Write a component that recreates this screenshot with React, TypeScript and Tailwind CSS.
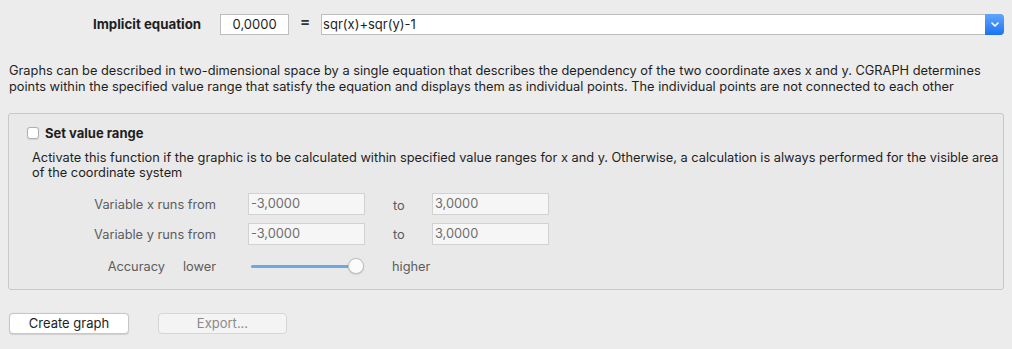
import React from "react";

function Field({ value, className = "" }: { value: string; className?: string }) {
  return (
    <div
      className={`h-[22px] w-[117px] border border-[#d2d2d2] bg-[#f6f6f6] pl-[2px] text-[12.8px] leading-[20px] text-[#6e6e6e] ${className}`}
    >
      {value}
    </div>
  );
}

export default function App() {
  return (
    <div
      className="h-[349px] w-[1012px] overflow-hidden bg-[#ececec] text-[#222] antialiased"
      style={{ fontFamily: "Inter, 'Noto Sans', sans-serif" }}
    >
      {/* Top row */}
      <div className="flex items-center pt-[14px]">
        <div className="ml-[93px] text-[13.3px] font-bold text-[#1e1e1e]">Implicit equation</div>
        <div className="ml-[19px] flex h-[21px] w-[69px] items-center justify-center border border-[#bdbdbd] bg-white text-[13px] text-[#1e1e1e]">
          0,0000
        </div>
        <div className="ml-[11px] w-[9px] -translate-y-[3px] text-[15px] font-bold leading-none text-[#333]">=</div>
        <div className="ml-[12px] flex h-[21px] w-[683px] items-stretch rounded-r-[4px] border-y border-l border-[#bdbdbd] bg-white">
          <div className="flex-1 pl-[1px] text-[13px] leading-[19px] text-[#1e1e1e]">sqr(x)+sqr(y)-1</div>
          <div className="-my-px flex w-[19px] items-center justify-center rounded-r-[4px] bg-gradient-to-b from-[#5fa5fa] to-[#1672f3]">
            <svg width="8" height="5" viewBox="0 0 8 5">
              <path d="M1 1 L4 4 L7 1" stroke="white" strokeWidth="1.6" fill="none" strokeLinecap="round" strokeLinejoin="round" />
            </svg>
          </div>
        </div>
      </div>

      {/* Description */}
      <div className="mt-[28px] pl-[9px] pr-[10px] text-[12.8px] leading-[16px] text-[#1e1e1e]">
        Graphs can be described in two-dimensional space by a single equation that describes the dependency of the two coordinate axes x and y. CGRAPH determines points within the specified value range that satisfy the equation and displays them as individual points. The individual points are not connected to each other
      </div>

      {/* Group box */}
      <div className="ml-[8px] mt-[18px] h-[177px] w-[996px] rounded-[3px] border border-[#c8c8c8] bg-[#e9e9e9]">
        <div className="mt-[11px] flex items-center">
          <div className="ml-[18px] h-[12px] w-[12px] rounded-[3px] border border-[#b0b0b0] bg-white shadow-[0_0.5px_1px_rgba(0,0,0,0.1)]" />
          <div className="ml-[6px] text-[13px] font-bold leading-[16px] text-[#1e1e1e]">Set value range</div>
        </div>
        <div className="mt-[9px] pl-[23px] pr-[1px] text-[12.8px] leading-[15px] text-[#1e1e1e]">
          Activate this function if the graphic is to be calculated within specified value ranges for x and y. Otherwise, a calculation is always performed for the visible area of the coordinate system
        </div>

        <div className="mt-[13px] flex items-center">
          <div className="w-[207px] text-right text-[12.8px] text-[#5c5c5c]">Variable x runs from</div>
          <Field value="-3,0000" className="ml-[32px]" />
          <div className="ml-[28px] w-[39px] pt-[3px] text-[12.8px] text-[#5c5c5c]">to</div>
          <Field value="3,0000" />
        </div>
        <div className="mt-[8px] flex items-center">
          <div className="w-[207px] text-right text-[12.8px] text-[#5c5c5c]">Variable y runs from</div>
          <Field value="-3,0000" className="ml-[32px]" />
          <div className="ml-[28px] w-[39px] text-[12.8px] text-[#5c5c5c]">to</div>
          <Field value="3,0000" />
        </div>
        <div className="mt-[11px] flex h-[20px] items-center">
          <div className="flex w-[207px] justify-end gap-[18px] text-[12.8px] text-[#5c5c5c]">
            <span>Accuracy</span>
            <span>lower</span>
          </div>
          <div className="relative ml-[35px] h-[20px] w-[114px]">
            <div className="absolute left-0 right-[2px] top-[8.5px] h-[3px] rounded-full bg-[#d6d6d6]" />
            <div className="absolute left-0 top-[8.5px] h-[3px] w-[102px] rounded-full bg-[#6fa6e4]" />
            <div className="absolute left-[97px] top-[2px] h-[16px] w-[16px] rounded-full border border-[#c2c2c2] bg-[#fbfbfb] shadow-[0_0.5px_1.5px_rgba(0,0,0,0.2)]" />
          </div>
          <div className="ml-[27px] text-[12.8px] text-[#5c5c5c]">higher</div>
        </div>
      </div>

      {/* Buttons */}
      <div className="mt-[23px] flex items-center">
        <div className="ml-[9px] flex h-[21px] w-[120px] items-center justify-center rounded-[4px] border border-[#c6c6c6] bg-white text-[13px] text-[#1e1e1e] shadow-[0_0.5px_1px_rgba(0,0,0,0.12)]">
          Create graph
        </div>
        <div className="ml-[29px] flex h-[21px] w-[129px] items-center justify-center rounded-[4px] border border-[#d6d6d6] bg-[#f4f4f4] text-[13px] text-[#8a8a8a]">
          Export...
        </div>
      </div>
    </div>
  );
}
